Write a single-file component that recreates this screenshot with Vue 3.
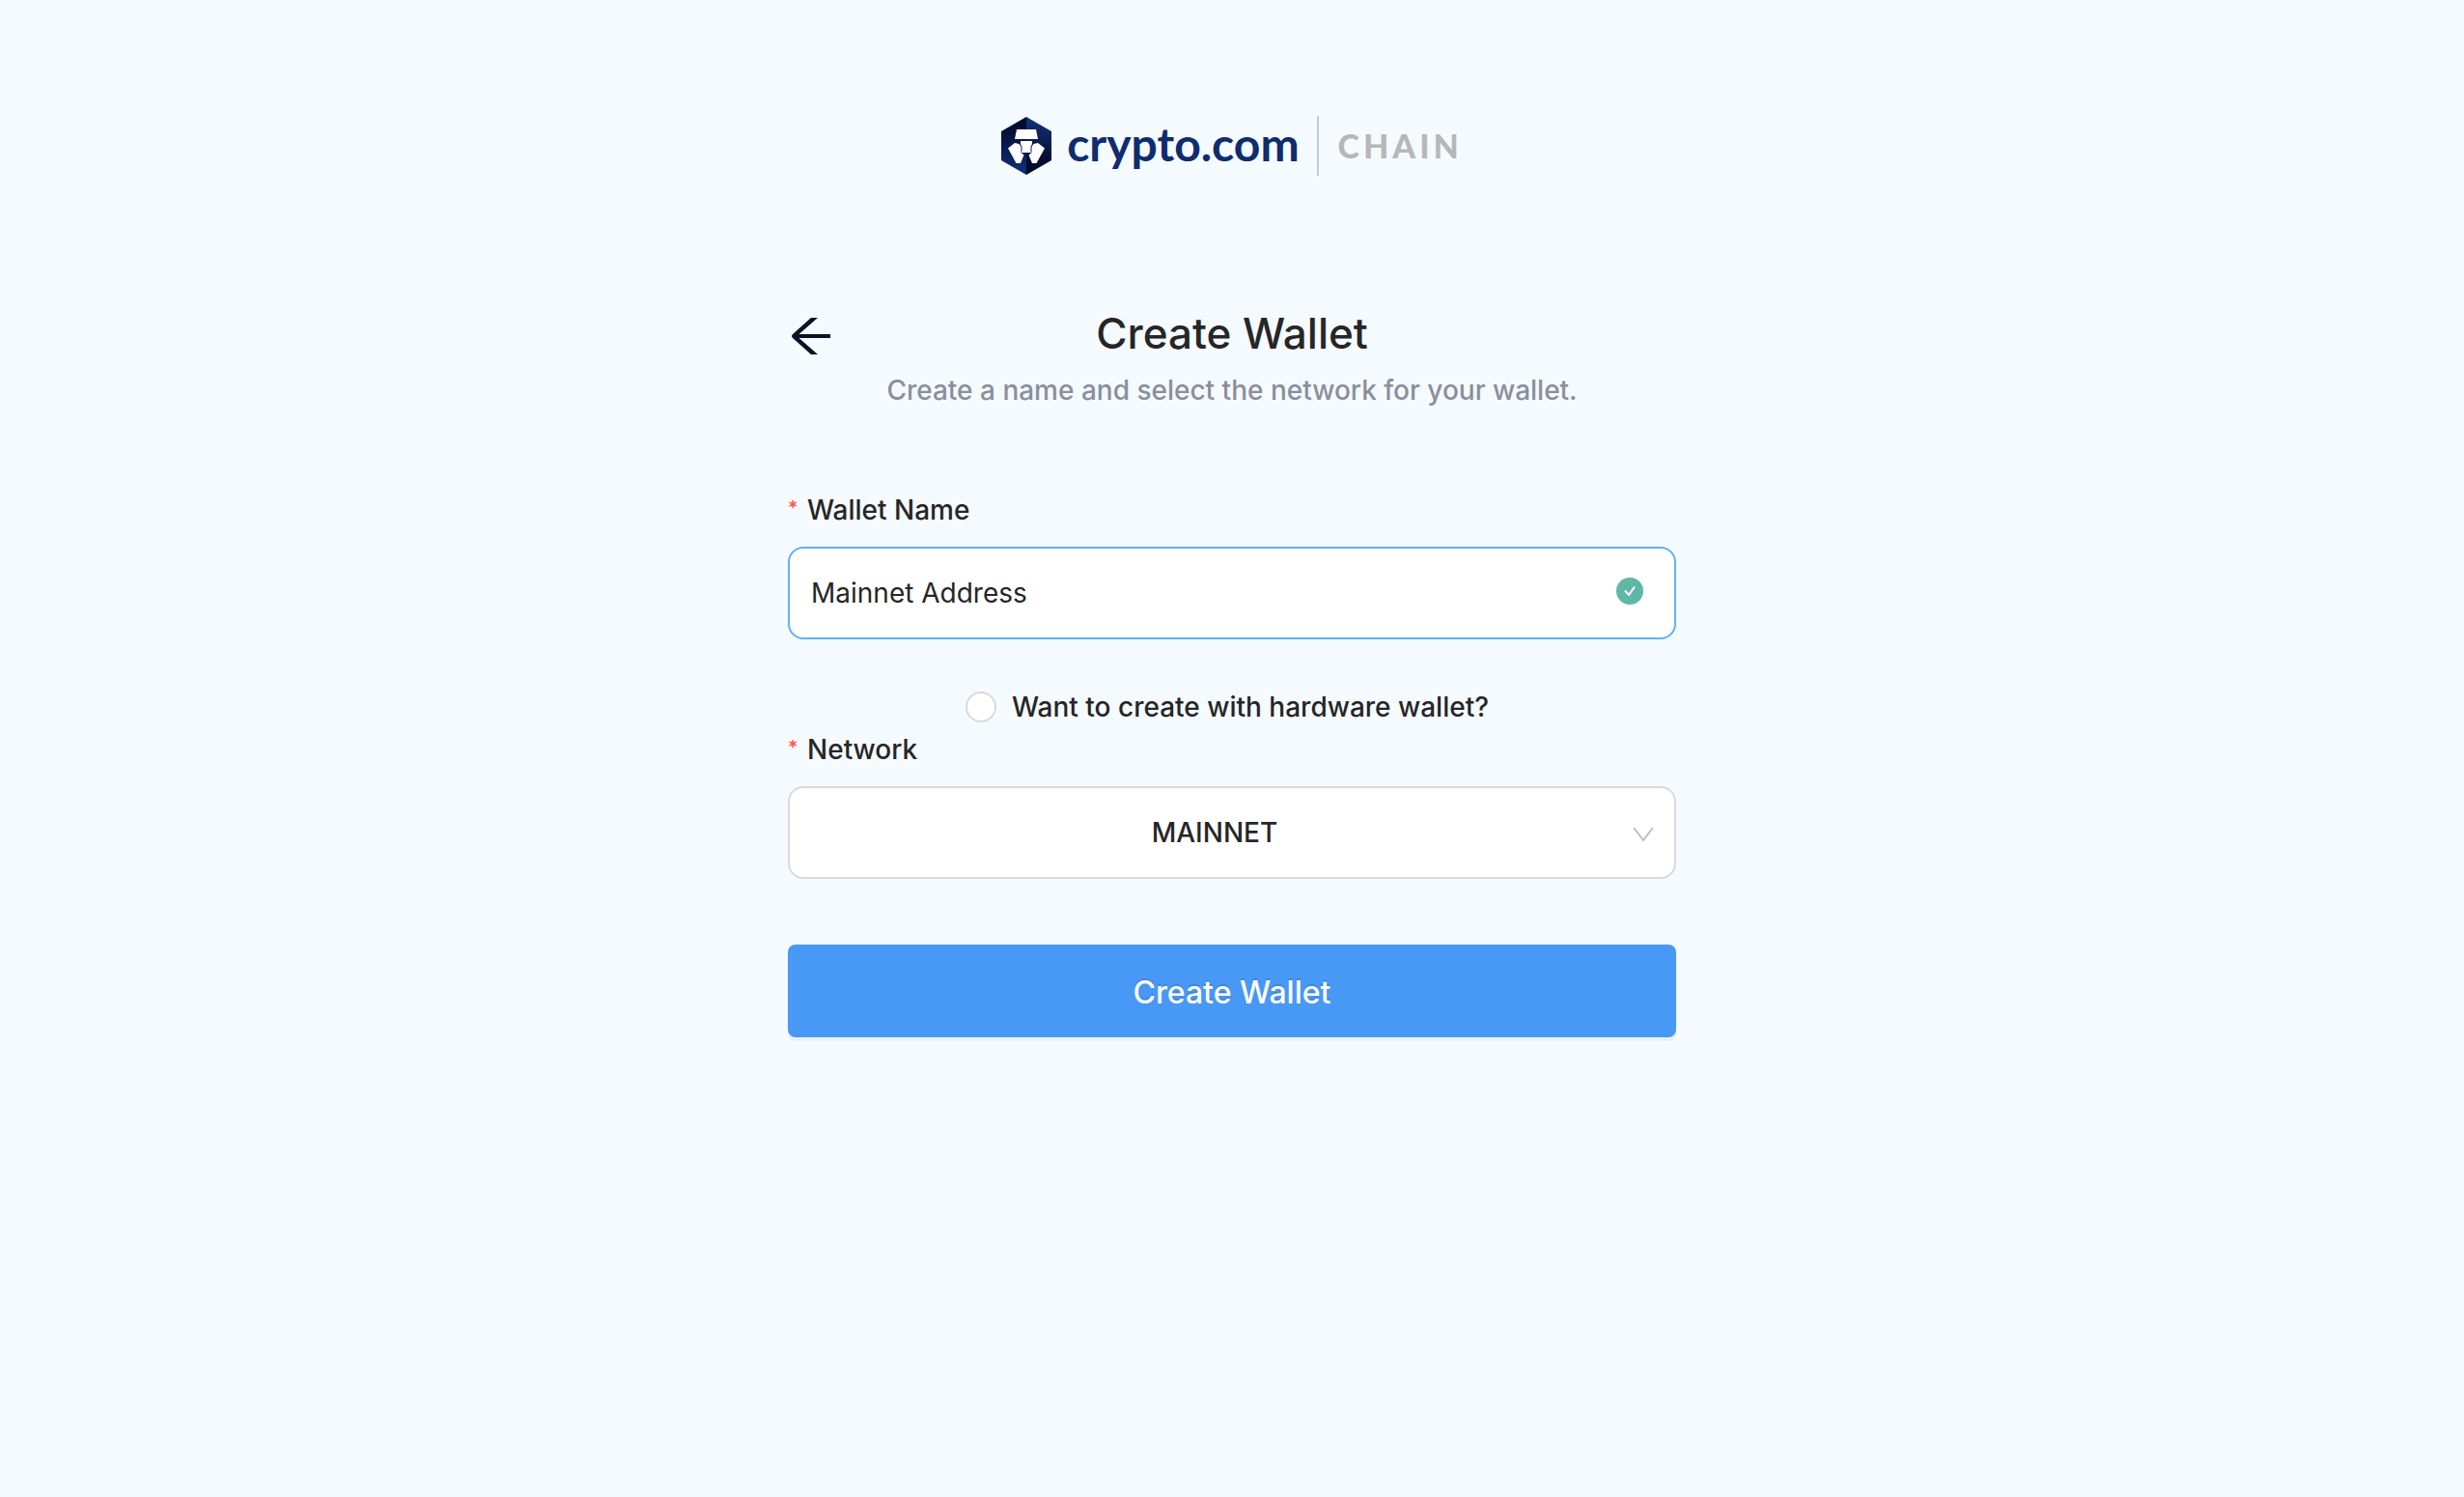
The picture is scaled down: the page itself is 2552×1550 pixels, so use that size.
<script setup>
import { ref } from 'vue'

const walletName = ref('Mainnet Address')
const network = ref('MAINNET')
const networks = ['MAINNET', 'TESTNET']
</script>

<template>
  <div class="page">
    <header class="brand">
      <svg class="brand-mark" viewBox="0 0 52 60" aria-hidden="true">
        <defs>
          <linearGradient id="mark-left" x1="0" y1="0" x2="0" y2="1">
            <stop offset="0.1" stop-color="#030a2e" />
            <stop offset="0.9" stop-color="#0f2c6e" />
          </linearGradient>
          <linearGradient id="mark-right" x1="0" y1="0" x2="0" y2="1">
            <stop offset="0.1" stop-color="#112f72" />
            <stop offset="0.8" stop-color="#030a2e" />
          </linearGradient>
        </defs>
        <path d="M26 0 0 15v30l26 15z" fill="url(#mark-left)" />
        <path d="M26 0l26 15v30L26 60z" fill="url(#mark-right)" />
        <path
          d="M16 13h20l2 10H14zM20 25h12v3l-1.500 3v4l.5 2H21l.5-2v-4L20 28zM14 27l4.500 1 2 3v6l3 2.500L20 48h-4.500L7 32.500zM38 27l-4.500 1-2 3v6l-3 2.500L32 48h4.500L45 32.500z"
          fill="#fff"
        />
      </svg>
      <span class="brand-name">crypto.com</span>
      <span class="brand-product">CHAIN</span>
    </header>

    <main class="content">
      <div class="heading">
        <button class="back" type="button" aria-label="Back">
          <svg viewBox="0 0 40 38" aria-hidden="true">
            <path d="M20 0h7L7.500 17H40v4H7.500L27 38h-7L1 21q-2-2 0-4z" fill="#0b1226" />
          </svg>
        </button>
        <h1>Create Wallet</h1>
      </div>
      <p class="intro">Create a name and select the network for your wallet.</p>

      <form class="form" @submit.prevent>
        <label class="label" for="wallet-name"><span class="required">*</span>Wallet Name</label>
        <div class="control">
          <input id="wallet-name" v-model="walletName" class="field active" type="text" />
          <svg class="valid" viewBox="0 0 28 28" aria-hidden="true">
            <circle cx="14" cy="14" r="14" fill="#5fb8a5" />
            <path d="M9 13.500l4 4.500 6-8.500" fill="none" stroke="#fff" stroke-width="2" />
          </svg>
        </div>

        <label class="hardware">
          <input type="radio" name="hardware" />
          <span>Want to create with hardware wallet?</span>
        </label>

        <label class="label" for="network"><span class="required">*</span>Network</label>
        <div class="control">
          <select id="network" v-model="network" class="field select">
            <option v-for="item in networks" :key="item">{{ item }}</option>
          </select>
          <svg class="chevron" viewBox="0 0 22 14" aria-hidden="true">
            <path d="M1 0l10 13L21 0" fill="none" stroke="#bfbfbf" stroke-width="2" />
          </svg>
        </div>

        <button class="submit" type="submit">Create Wallet</button>
      </form>
    </main>
  </div>
</template>

<style>
body {
  margin: 0;
  background: #f5faff;
}
</style>

<style scoped>
.page {
  box-sizing: border-box;
  min-height: 100vh;
  padding: 120px 24px;
  background: #f5faff;
  color: #262626;
  font: 500 28px/40px Inter, "Liberation Sans", sans-serif;
}

.brand {
  display: flex;
  justify-content: center;
  align-items: center;
  height: 62px;
}

.brand-mark {
  width: 52px;
  height: 60px;
  margin-right: 16px;
}

.brand-name {
  padding: 0 18px 4px 0;
  color: #0f2c6e;
  font: 700 48px/58px Lato, sans-serif;
}

.brand-product {
  padding-left: 20px;
  border-left: 2px solid #c8cbce;
  color: #b6b7b9;
  font: 900 34px/62px Lato, sans-serif;
  letter-spacing: 4px;
}

.content {
  max-width: 920px;
  margin: 134px auto 0;
}

.heading {
  display: grid;
  grid-template-columns: 48px 1fr 48px;
  align-items: center;
}

.back {
  display: flex;
  justify-content: center;
  padding: 4px 0 0;
  border: 0;
  background: none;
}

.back svg {
  width: 40px;
  height: 38px;
}

h1 {
  margin: 0;
  padding-bottom: 2px;
  font-size: 44px;
  font-weight: 500;
  line-height: 58px;
  text-align: center;
}

.intro {
  margin: 8px 0 0;
  color: #8a8f9b;
  text-align: center;
}

.form {
  display: flex;
  flex-direction: column;
  margin-top: 84px;
}

.label {
  display: flex;
}

.required {
  width: 20px;
  color: #ff4d4f;
  font-size: 20px;
  line-height: 36px;
}

.control {
  display: grid;
  margin-top: 18px;
}

.control > * {
  grid-area: 1 / 1;
}

.field {
  box-sizing: border-box;
  width: 100%;
  height: 96px;
  padding: 0 22px;
  border: 2px solid #d9d9d9;
  border-radius: 16px;
  outline: 0;
  background: #fff;
  color: #262626;
  font: inherit;
}

.active {
  border-color: #62b0f8;
  font-weight: 400;
}

.valid {
  place-self: center end;
  width: 28px;
  height: 28px;
  margin: 0 34px 4px 0;
}

.select {
  appearance: none;
  padding-right: 58px;
  text-align: center;
  text-align-last: center;
}

.chevron {
  place-self: center end;
  width: 22px;
  height: 14px;
  margin: 4px 23px 0 0;
  pointer-events: none;
}

.hardware {
  display: flex;
  align-self: center;
  align-items: center;
  gap: 16px;
  height: 40px;
  margin: 50px 10px 4px 0;
}

.hardware input {
  appearance: none;
  box-sizing: border-box;
  width: 32px;
  height: 32px;
  margin: 0;
  border: 2px solid #d9d9d9;
  border-radius: 50%;
  background: #fff;
}

.submit {
  height: 96px;
  margin-top: 68px;
  padding: 4px 0 0;
  border: 0;
  border-radius: 8px;
  background: #4898f5;
  box-shadow: 0 4px 0 rgba(0, 0, 0, 0.04);
  color: #fff;
  font: 500 32px/40px Inter, "Liberation Sans", sans-serif;
  text-shadow: 0 -2px 0 rgba(0, 0, 0, 0.12);
}
</style>
